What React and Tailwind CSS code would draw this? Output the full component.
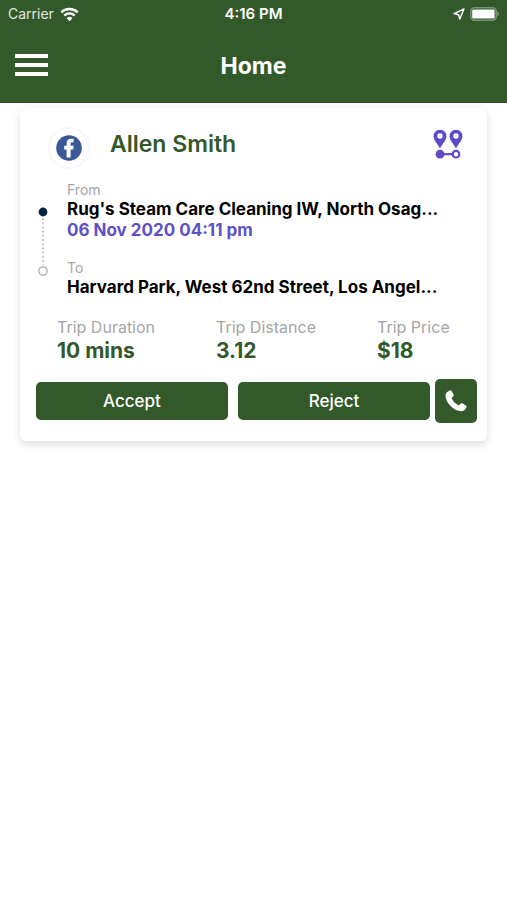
import React from 'react';

const trip = {
    name: 'Allen Smith',
    from: "Rug's Steam Care Cleaning IW, North Osag...",
    date: '06 Nov 2020 04:11 pm',
    to: 'Harvard Park, West 62nd Street, Los Angel...',
};

const stats = [
    { label: 'Trip Duration', value: '10 mins', width: 'w-[159px]' },
    { label: 'Trip Distance', value: '3.12', width: 'w-[161px]' },
    { label: 'Trip Price', value: '$18', width: 'flex-1' },
];

function StatusBar() {
    return (
        <div className="grid h-7 grid-cols-3 items-center px-2 text-sm text-white">
            <div className="flex items-center gap-1.5">
                <span className="text-white/85">Carrier</span>
                <svg width="19" height="15" viewBox="0 0 19 15" fill="none" aria-hidden="true">
                    <path d="M1.3 5.4a11.7 11.7 0 0 1 16.4 0" stroke="white" strokeWidth="2.5" />
                    <path d="M4.3 8.6a7.4 7.4 0 0 1 10.4 0" stroke="white" strokeWidth="2.3" />
                    <path d="M9.5 14.2 6.6 11.2a4.1 4.1 0 0 1 5.8 0z" fill="white" />
                </svg>
            </div>
            <div className="text-center text-[15px] font-semibold">4:16 PM</div>
            <div className="flex items-center justify-end gap-1">
                <svg width="12" height="12" viewBox="0 0 12 12" fill="none" aria-hidden="true">
                    <path d="M1 5.6 11 1 6.8 11 5.6 6.8z" stroke="white" strokeWidth="1.4" strokeLinejoin="round" />
                </svg>
                <svg width="30" height="14" viewBox="0 0 30 14" fill="none" aria-hidden="true">
                    <rect x="1.8" y="0.8" width="25.4" height="12.4" rx="3.6" stroke="white" strokeOpacity="0.35" strokeWidth="1.6" />
                    <rect x="3.2" y="2.4" width="22.4" height="9.2" rx="1.4" fill="white" />
                    <path d="M28.4 4.6c2 .6 2 4.2 0 4.8z" fill="white" fillOpacity="0.4" />
                </svg>
            </div>
        </div>
    );
}

function Header() {
    return (
        <header className="bg-[#33592a]">
            <StatusBar />
            <div className="grid h-[75px] grid-cols-[1fr_auto_1fr] items-center border-b border-[#2a4a22] px-[15px]">
                <button type="button" aria-label="Menu" className="flex w-[33px] flex-col gap-[5px]">
                    <span className="h-1 w-full bg-white" />
                    <span className="h-1 w-full bg-white" />
                    <span className="h-1 w-full bg-white" />
                </button>
                <h1 className="pt-0.5 text-[23px] font-bold text-white">Home</h1>
            </div>
        </header>
    );
}

function FacebookAvatar() {
    return (
        <div className="flex size-[42px] items-center justify-center rounded-full border-2 border-[#f7f7f7]">
            <svg width="26" height="26" viewBox="0 0 26 26" aria-hidden="true">
                <circle cx="13" cy="13" r="12.8" fill="#3b5998" />
                <path
                    d="M10.6 22.4v-8H8.2v-3.6h2.4V8.6c0-3.2 1.7-4.9 4.7-4.9 1 0 1.9.1 2.4.2v3.4h-1.6c-1.100 0-1.500.5-1.500 1.500v2h3.100l-.5 3.600h-2.600v8z"
                    fill="white"
                />
            </svg>
        </div>
    );
}

function RouteIcon() {
    return (
        <svg width="30" height="30" viewBox="0 0 30 30" aria-hidden="true">
            <path
                d="M7 19.4C4.8 15.6.6 11.4.6 7.1a6.4 6.4 0 0 1 12.8 0C13.4 11.4 9.2 15.6 7 19.4zM7 4.3a2.7 2.7 0 1 0 0 5.4 2.7 2.7 0 0 0 0-5.4z"
                fill="#5b4bc4"
                fillRule="evenodd"
            />
            <path
                d="M23 19.4c-2.2-3.8-6.4-8-6.4-12.3a6.4 6.4 0 0 1 12.8 0c0 4.3-4.2 8.5-6.4 12.3zM23 4.3a2.7 2.7 0 1 0 0 5.4 2.7 2.7 0 0 0 0-5.4z"
                fill="#5b4bc4"
                fillRule="evenodd"
            />
            <circle cx="7" cy="25.2" r="4.4" fill="#5b4bc4" />
            <path d="M10 25.2h10" stroke="#5b4bc4" strokeWidth="2.2" />
            <circle cx="23" cy="25.2" r="3.3" fill="white" stroke="#5b4bc4" strokeWidth="2.2" />
        </svg>
    );
}

function PhoneIcon() {
    return (
        <svg width="24" height="24" viewBox="0 0 24 24" fill="white" aria-hidden="true">
            <path d="M5.6 1.6c.7-.5 1.4-.3 1.9.4l2 3.2c.5.8.3 1.6-.4 2.2l-1 .8c-.5.4-.5.9-.2 1.5 1.4 2.8 3.4 4.8 6.2 6.3.6.3 1.1.3 1.5-.2l.9-1c.6-.7 1.3-.8 2.1-.3l3.2 2c.8.5 1 1.2.5 1.9-1.1 2.1-2.8 3.8-5.2 3.8-3.6 0-7.7-2.4-10.7-5.5C3.5 13.7 1.5 10.1 1.5 6.7c0-2.3 1.9-4 4.1-5.1z" />
        </svg>
    );
}

function TripCard() {
    return (
        <article className="mx-5 mt-[5px] rounded-md bg-white px-4 pb-[18px] pt-[19px] shadow-[0_4px_8px_rgba(0,0,0,0.13)]">
            <div className="flex h-[42px] items-center pl-3 pr-2">
                <FacebookAvatar />
                <h2 className="ml-5 flex-1 pb-2 text-[23px] font-semibold text-[#33592a]">{trip.name}</h2>
                <div className="pb-2">
                    <RouteIcon />
                </div>
            </div>

            <div className="mt-3 flex gap-[18px]">
                <svg className="mt-[25px] ml-px shrink-0" width="12" height="72" viewBox="0 0 12 72" aria-hidden="true">
                    <circle cx="6" cy="6" r="4.4" fill="#06213f" />
                    <path d="M6 12v47" stroke="#b4bcc2" strokeWidth="1.6" strokeDasharray="2 2.2" />
                    <circle cx="6" cy="65" r="4.2" fill="white" stroke="#a3adb3" strokeWidth="1.3" />
                </svg>
                <div className="min-w-0 flex-1">
                    <p className="text-sm leading-[18px] text-[#a6a6a6]">From</p>
                    <p className="truncate text-[17px] leading-5 font-bold text-black">{trip.from}</p>
                    <p className="text-[17px] leading-[22px] font-bold text-[#5f50c8]">{trip.date}</p>
                    <p className="mt-[18px] text-sm leading-[18px] text-[#a6a6a6]">To</p>
                    <p className="truncate text-[17px] leading-5 font-bold text-black">{trip.to}</p>
                </div>
            </div>

            <dl className="mt-[18px] flex pl-[21px]">
                {stats.map((stat) => (
                    <div key={stat.label} className={stat.width}>
                        <dt className="text-base leading-6 text-[#a6a6a6]">{stat.label}</dt>
                        <dd className="text-[21px] leading-6 font-bold text-[#33592a]">{stat.value}</dd>
                    </div>
                ))}
            </dl>

            <div className="mt-4 flex items-center">
                <button type="button" className="h-[38px] flex-1 rounded-[5px] bg-[#33592a] pt-0.5 text-[17px] font-medium text-white">
                    Accept
                </button>
                <button type="button" className="ml-2.5 h-[38px] flex-1 rounded-[5px] bg-[#33592a] pt-0.5 text-[17px] font-medium text-white">
                    Reject
                </button>
                <button
                    type="button"
                    aria-label="Call"
                    className="ml-[5px] mr-[-6px] flex h-11 w-[42px] items-center justify-center rounded-[5px] bg-[#33592a] text-white"
                >
                    <PhoneIcon />
                </button>
            </div>
        </article>
    );
}

function App() {
    return (
        <div className="min-h-screen bg-white font-[Inter,'Liberation_Sans',sans-serif]">
            <Header />
            <main>
                <TripCard />
            </main>
        </div>
    );
}

export default App;
